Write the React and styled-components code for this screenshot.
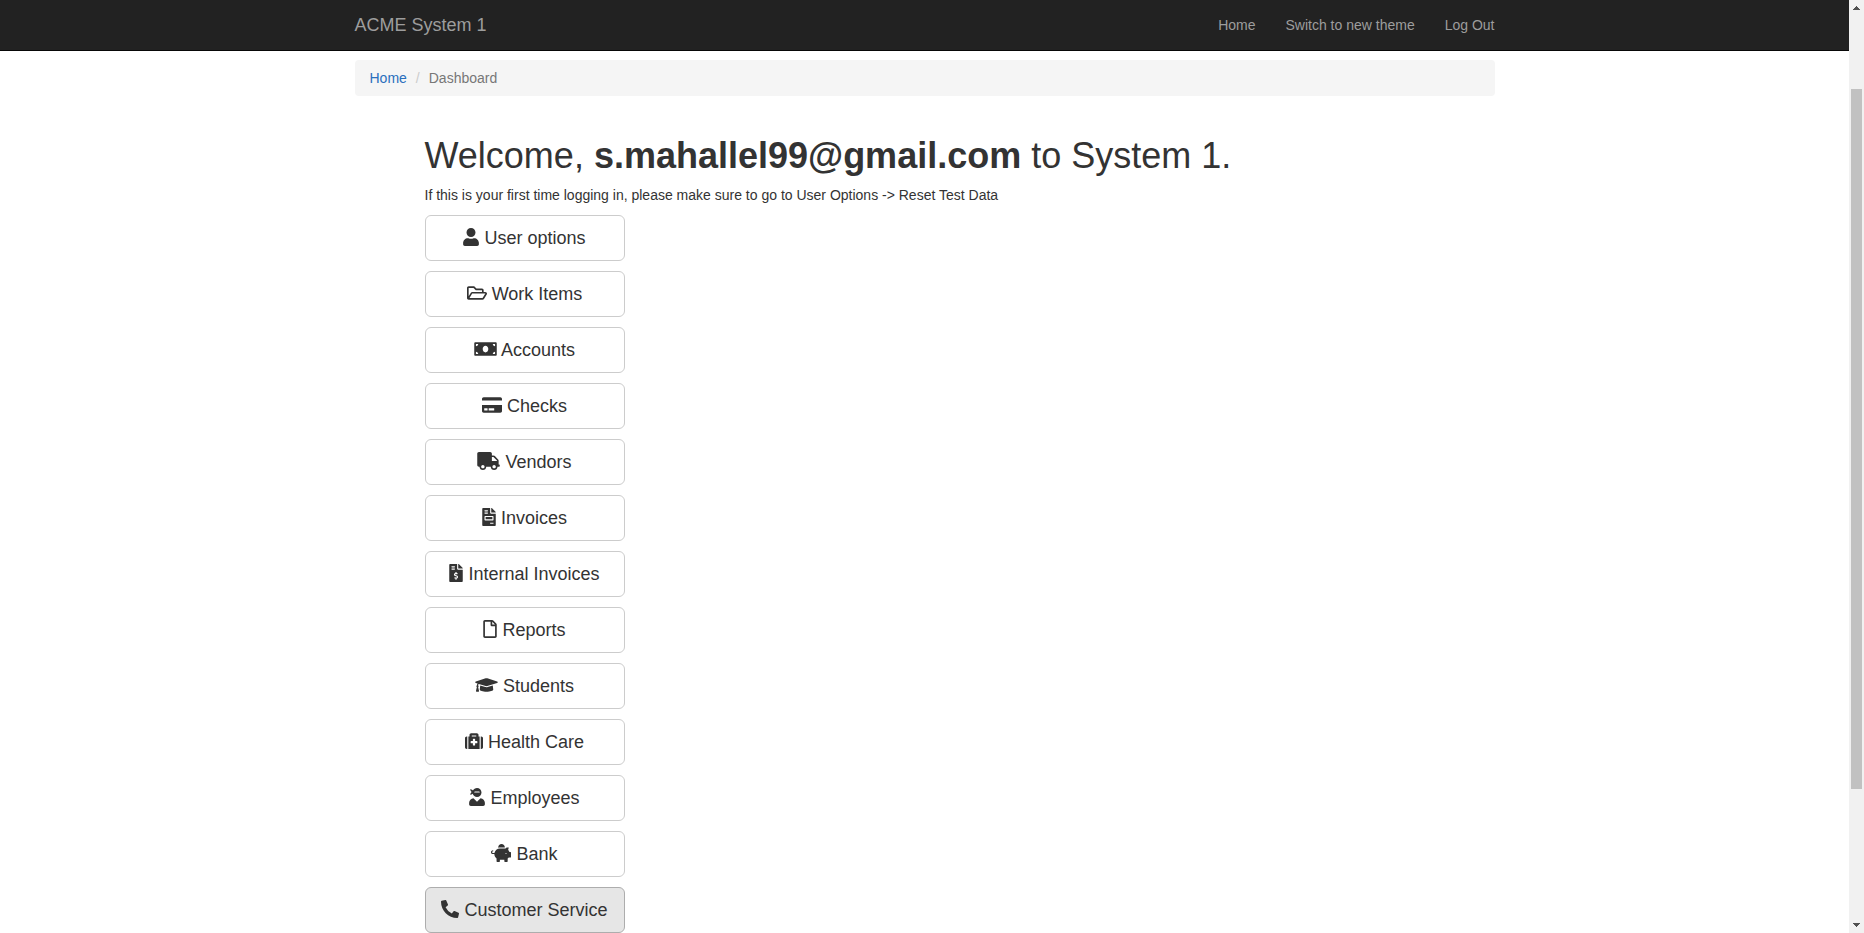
import React from "react";
import styled, { createGlobalStyle } from "styled-components";
import {
  FaUser,
  FaRegFolderOpen,
  FaMoneyBill,
  FaCreditCard,
  FaTruck,
  FaFileInvoice,
  FaFileInvoiceDollar,
  FaRegFile,
  FaGraduationCap,
  FaMedkit,
  FaUserNinja,
  FaPiggyBank,
  FaPhoneAlt,
} from "react-icons/fa";

const GlobalStyle = createGlobalStyle`
  *, *::before, *::after { box-sizing: border-box; }
  body {
    margin: 0;
    background: #fff;
    color: #333;
    font-family: "Helvetica Neue", Helvetica, Arial, "Liberation Sans", sans-serif;
    font-size: 14px;
    line-height: 20px;
  }
`;

const Shell = styled.div`
  display: flex;
  align-items: flex-start;
  min-height: 100vh;
`;

const Page = styled.div`
  flex: 1;
  min-width: 0;
`;

const Container = styled.div`
  width: 100%;
  max-width: 1170px;
  margin: 0 auto;
  padding: 0 15px;
`;

const Navbar = styled.header`
  background: #222;
  border-bottom: 1px solid #080808;
`;

const NavInner = styled(Container)`
  display: flex;
  align-items: center;
  justify-content: space-between;
`;

const Brand = styled.a`
  padding: 15px 0;
  font-size: 18px;
  color: #9d9d9d;
  text-decoration: none;
`;

const NavList = styled.nav`
  display: flex;
  gap: 30px;
`;

const NavLink = styled.a`
  padding: 15px 0;
  color: #9d9d9d;
  text-decoration: none;
  &:hover { color: #fff; }
`;

const Breadcrumb = styled.ol`
  display: flex;
  margin: 9px 0 0;
  padding: 8px 15px;
  list-style: none;
  background: #f5f5f5;
  border-radius: 4px;
`;

const Crumb = styled.li`
  color: #777;
  & + &::before {
    content: "/";
    padding: 0 9px;
    color: #ccc;
  }
`;

const CrumbLink = styled.a`
  color: #2a6fbd;
  text-decoration: none;
`;

const Main = styled.main`
  padding: 40px 70px 0;
`;

const Title = styled.h1`
  margin: 0 0 9px;
  font-size: 36px;
  font-weight: 500;
  line-height: 40px;
`;

const Hint = styled.p`
  margin: 0 0 10px;
`;

const Menu = styled.div`
  display: flex;
  flex-direction: column;
  gap: 10px;
  width: 200px;
`;

const MenuButton = styled.button`
  height: 46px;
  padding: 0;
  border: 1px solid ${(p) => (p.$active ? "#adadad" : "#ccc")};
  border-radius: 6px;
  background: ${(p) => (p.$active ? "#e6e6e6" : "#fff")};
  color: #333;
  font-family: inherit;
  font-size: 18px;
  line-height: 24px;
  white-space: nowrap;
  cursor: pointer;

  svg {
    width: ${(p) => p.$iconWidth}px;
    height: 18px;
    vertical-align: -2px;
  }
`;

const ScrollBar = styled.div`
  position: sticky;
  top: 0;
  display: flex;
  flex-direction: column;
  width: 15px;
  height: 100vh;
  background: #f1f1f1;
`;

const ArrowBox = styled.svg`
  flex: none;
  width: 15px;
  height: 17px;
  fill: #505050;
`;

const Space = styled.div`
  flex: ${(p) => p.$grow} 0 0;
`;

const Thumb = styled.div`
  flex: 700 0 0;
  margin: 0 2px;
  background: #c1c1c1;
`;

const items = [
  { label: "User options", Icon: FaUser, width: 16 },
  { label: "Work Items", Icon: FaRegFolderOpen, width: 20 },
  { label: "Accounts", Icon: FaMoneyBill, width: 23 },
  { label: "Checks", Icon: FaCreditCard, width: 20 },
  { label: "Vendors", Icon: FaTruck, width: 23 },
  { label: "Invoices", Icon: FaFileInvoice, width: 14 },
  { label: "Internal Invoices", Icon: FaFileInvoiceDollar, width: 14 },
  { label: "Reports", Icon: FaRegFile, width: 14 },
  { label: "Students", Icon: FaGraduationCap, width: 23 },
  { label: "Health Care", Icon: FaMedkit, width: 18 },
  { label: "Employees", Icon: FaUserNinja, width: 16 },
  { label: "Bank", Icon: FaPiggyBank, width: 20 },
  { label: "Customer Service", Icon: FaPhoneAlt, width: 18, active: true },
];

export default function App() {
  return (
    <Shell>
      <GlobalStyle />
      <Page>
        <Navbar>
          <NavInner>
            <Brand href="#">ACME System 1</Brand>
            <NavList>
              <NavLink href="#">Home</NavLink>
              <NavLink href="#">Switch to new theme</NavLink>
              <NavLink href="#">Log Out</NavLink>
            </NavList>
          </NavInner>
        </Navbar>
        <Container>
          <Breadcrumb>
            <Crumb><CrumbLink href="#">Home</CrumbLink></Crumb>
            <Crumb>Dashboard</Crumb>
          </Breadcrumb>
          <Main>
            <Title>
              Welcome, <b>s.mahallel99@gmail.com</b> to System 1.
            </Title>
            <Hint>
              If this is your first time logging in, please make sure to go to User Options -&gt; Reset Test Data
            </Hint>
            <Menu>
              {items.map(({ label, Icon, width, active }) => (
                <MenuButton key={label} type="button" $active={active} $iconWidth={width}>
                  <Icon aria-hidden="true" /> {label}
                </MenuButton>
              ))}
            </Menu>
          </Main>
        </Container>
      </Page>
      <ScrollBar aria-hidden="true">
        <ArrowBox viewBox="0 0 15 17" shapeRendering="crispEdges">
          <path d="M7 6h1v1h1v1h1v1h1v1H4V9h1V8h1V7h1z" />
        </ArrowBox>
        <Space $grow={72} />
        <Thumb />
        <Space $grow={127} />
        <ArrowBox viewBox="0 0 15 17" shapeRendering="crispEdges">
          <path d="M4 7h7v1h-1v1H9v1H8v1H7v-1H6V9H5V8H4z" />
        </ArrowBox>
      </ScrollBar>
    </Shell>
  );
}
